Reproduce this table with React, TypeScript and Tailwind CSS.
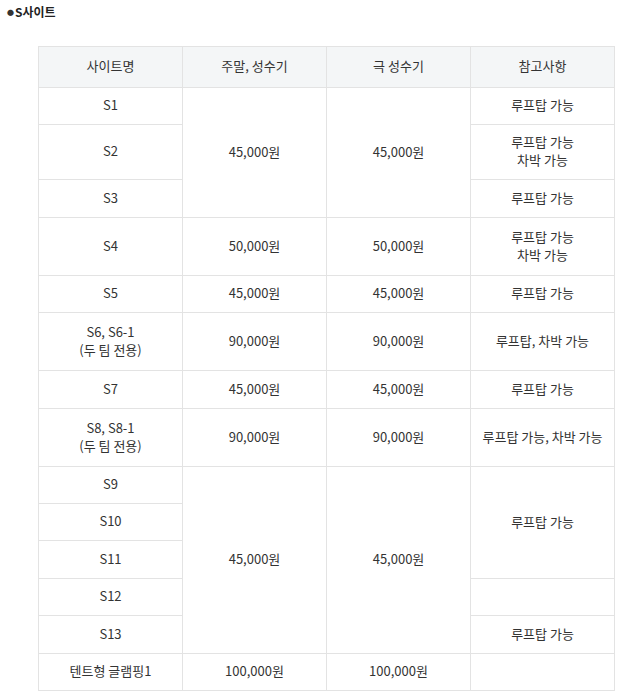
type Cell = {
  text?: string[];
  rowSpan?: number;
};

type Row = {
  h: string;
  cells: Cell[];
};

const rows: Row[] = [
  { h: "h-[37px]", cells: [{ text: ["S1"] }, { text: ["45,000원"], rowSpan: 3 }, { text: ["45,000원"], rowSpan: 3 }, { text: ["루프탑 가능"] }] },
  { h: "h-[55px]", cells: [{ text: ["S2"] }, { text: ["루프탑 가능", "차박 가능"] }] },
  { h: "h-[38px]", cells: [{ text: ["S3"] }, { text: ["루프탑 가능"] }] },
  { h: "h-[58px]", cells: [{ text: ["S4"] }, { text: ["50,000원"] }, { text: ["50,000원"] }, { text: ["루프탑 가능", "차박 가능"] }] },
  { h: "h-[37px]", cells: [{ text: ["S5"] }, { text: ["45,000원"] }, { text: ["45,000원"] }, { text: ["루프탑 가능"] }] },
  { h: "h-[58px]", cells: [{ text: ["S6, S6-1", "(두 팀 전용)"] }, { text: ["90,000원"] }, { text: ["90,000원"] }, { text: ["루프탑, 차박 가능"] }] },
  { h: "h-[38px]", cells: [{ text: ["S7"] }, { text: ["45,000원"] }, { text: ["45,000원"] }, { text: ["루프탑 가능"] }] },
  { h: "h-[58px]", cells: [{ text: ["S8, S8-1", "(두 팀 전용)"] }, { text: ["90,000원"] }, { text: ["90,000원"] }, { text: ["루프탑 가능, 차박 가능"] }] },
  { h: "h-[37px]", cells: [{ text: ["S9"] }, { text: ["45,000원"], rowSpan: 5 }, { text: ["45,000원"], rowSpan: 5 }, { text: ["루프탑 가능"], rowSpan: 3 }] },
  { h: "h-[37px]", cells: [{ text: ["S10"] }] },
  { h: "h-[38px]", cells: [{ text: ["S11"] }] },
  { h: "h-[37px]", cells: [{ text: ["S12"] }, { text: [] }] },
  { h: "h-[38px]", cells: [{ text: ["S13"] }, { text: ["루프탑 가능"] }] },
  { h: "h-[37px]", cells: [{ text: ["텐트형 글램핑1"] }, { text: ["100,000원"] }, { text: ["100,000원"] }, { text: [] }] },
];

const headers = ["사이트명", "주말, 성수기", "극 성수기", "참고사항"];

export default function App() {
  return (
    <div
      className="min-h-screen w-[620px] bg-white text-[#333]"
      style={{ fontFamily: '"Noto Sans CJK KR", "Noto Sans", sans-serif' }}
    >
      <div className="flex items-center gap-[1px] pl-[7px] pt-[3px] text-[12px] font-bold leading-[18px] text-[#222]">
        <span className="text-[7px] text-[#333]">●</span>
        <span>S사이트</span>
      </div>

      <div className="pl-[38px] pt-[25px]">
        <table className="w-[576px] table-fixed border-collapse text-center text-[13px] leading-[18px]">
          <colgroup>
            <col className="w-[144px]" />
            <col className="w-[144px]" />
            <col className="w-[144px]" />
            <col className="w-[144px]" />
          </colgroup>
          <thead>
            <tr className="h-[41px] bg-[#f4f6f7]">
              {headers.map((h) => (
                <th key={h} className="border border-[#e3e3e3] p-0 pb-[2px] font-normal">
                  {h}
                </th>
              ))}
            </tr>
          </thead>
          <tbody>
            {rows.map((row, i) => (
              <tr key={i} className={row.h}>
                {row.cells.map((cell, j) => (
                  <td key={j} rowSpan={cell.rowSpan} className="border border-[#e3e3e3] p-0 pb-[2px] align-middle">
                    {cell.text?.map((line) => (
                      <div key={line}>{line}</div>
                    ))}
                  </td>
                ))}
              </tr>
            ))}
          </tbody>
        </table>
      </div>
    </div>
  );
}
